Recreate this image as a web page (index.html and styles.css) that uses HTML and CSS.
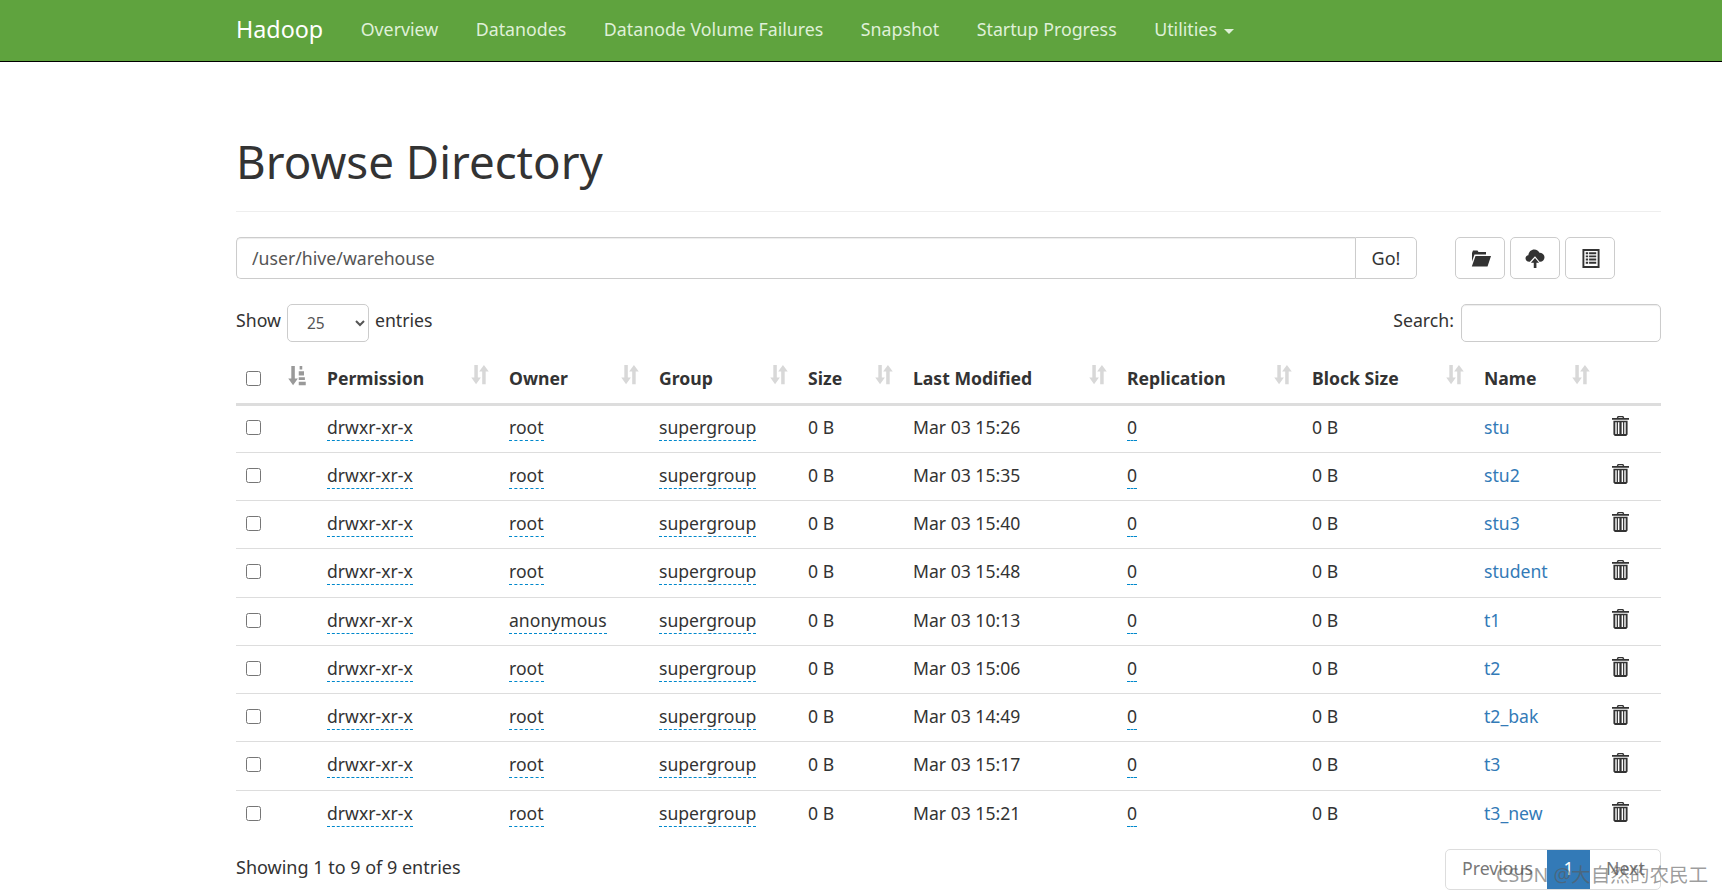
FILE: index.html
```html
<!DOCTYPE html>
<html lang="en">
<head>
<meta charset="utf-8">
<title>Browsing HDFS</title>
<link rel="stylesheet" href="styles.css">
</head>
<body>
<svg class="defs" width="0" height="0" aria-hidden="true">
  <defs>
    <symbol id="sort" viewBox="0 0 20 24">
      <path d="M3.500 1h4v14.500h3.500L5.500 23 0 15.500h3.500zM12.500 23V8.500H9L14.500 1 20 8.500h-3.500V23z"/>
    </symbol>
    <symbol id="sorted" viewBox="0 0 20 24">
      <path d="M3.500 1h4v14.500h3.500L5.500 23 0 15.500h3.500z"/>
      <path d="M13 1h3v4h-3zM12 7h6v5h-6zM12 14h7v3h-7zM12 19h8v4h-8z"/>
    </symbol>
    <symbol id="trash" viewBox="0 0 18 21">
      <path fill-rule="evenodd" d="M6 0h6l1 2h5v2H0V2h5zM7 1.200 6.600 2h4.800L11 1.200zM1.500 5h15v14.500L15 21H3l-1.500-1.500zM3.500 6.500v12.500h1.500V6.500zM6.300 6.500v12.500h1.500V6.500zM10.200 6.500v12.500h1.500V6.500zM13 6.500v12.500h1.500V6.500z"/>
    </symbol>
  </defs>
</svg>

<nav class="navbar">
  <div class="nav-inner">
    <a class="brand" href="#">Hadoop</a>
    <a class="nav-link" href="#">Overview</a>
    <a class="nav-link" href="#">Datanodes</a>
    <a class="nav-link" href="#">Datanode Volume Failures</a>
    <a class="nav-link" href="#">Snapshot</a>
    <a class="nav-link" href="#">Startup Progress</a>
    <a class="nav-link" href="#">Utilities <span class="caret"></span></a>
  </div>
</nav>

<main class="container">
  <header class="page-header">
    <h1>Browse Directory</h1>
  </header>

  <div class="path-row">
    <div class="input-group">
      <input class="path-input" type="text" value="/user/hive/warehouse">
      <button class="go-btn" type="button">Go!</button>
    </div>
    <div class="tools">
      <button class="tool-btn" type="button" aria-label="Create directory">
        <svg class="tool-icon nudge" viewBox="0 0 20 18"><path d="M1 3.500 2 1h4.500l1 1.500H15V5H3.500L1 12zM4.500 6.500H20L16.500 17H0.800z"/></svg>
      </button>
      <button class="tool-btn" type="button" aria-label="Upload files">
        <svg class="tool-icon" viewBox="0 0 20 20"><path d="M4 13.500C1.500 13.500 0 11.800 0 9.800 0 8 1.300 6.800 3 6.500 3.300 3 6 .5 9.300.5c2.500 0 4.500 1.300 5.400 3.500 2.900-.2 5.300 2 5.300 4.800 0 2.700-2 4.700-4.600 4.700h-.6L10 7.500 4.600 13.500z"/><path d="M10 9.500 14.300 14.500H11.500V20H8.700V14.500H5.700z"/></svg>
      </button>
      <button class="tool-btn" type="button" aria-label="Cut and paste">
        <svg class="tool-icon nudge" viewBox="0 0 18 20"><path fill-rule="evenodd" d="M0 0h18v20H0zM2 2v16h14V2zM3.500 3.500h2.500v2H3.500zM7 3.500h7.500v2H7zM3.500 6.800h2.500v2H3.500zM7 6.800h7.500v2H7zM3.500 10h2.500v2H3.500zM7 10h7.500v2H7zM3.500 13.500h2.500v2H3.500zM7 13.500h7.500v2H7z"/></svg>
      </button>
    </div>
  </div>

  <div class="table-controls">
    <label class="length">Show
      <select class="length-select"><option>25</option></select>
      entries</label>
    <label class="search">Search:
      <input class="search-input" type="search">
    </label>
  </div>

  <table class="files">
    <colgroup>
      <col class="c-check"><col class="c-sort"><col class="c-perm"><col class="c-owner"><col class="c-group"><col class="c-size"><col class="c-mod"><col class="c-rep"><col class="c-block"><col class="c-name"><col class="c-del">
    </colgroup>
    <thead>
      <tr>
        <th><input class="cb" type="checkbox"></th>
        <th><svg class="sort-icon sorted"><use href="#sorted"/></svg></th>
        <th><div class="th-in">Permission<svg class="sort-icon"><use href="#sort"/></svg></div></th>
        <th><div class="th-in">Owner<svg class="sort-icon"><use href="#sort"/></svg></div></th>
        <th><div class="th-in">Group<svg class="sort-icon"><use href="#sort"/></svg></div></th>
        <th><div class="th-in">Size<svg class="sort-icon"><use href="#sort"/></svg></div></th>
        <th><div class="th-in">Last Modified<svg class="sort-icon"><use href="#sort"/></svg></div></th>
        <th><div class="th-in">Replication<svg class="sort-icon"><use href="#sort"/></svg></div></th>
        <th><div class="th-in">Block Size<svg class="sort-icon"><use href="#sort"/></svg></div></th>
        <th><div class="th-in">Name<svg class="sort-icon"><use href="#sort"/></svg></div></th>
        <th></th>
      </tr>
    </thead>
    <tbody>
      <tr><td><input class="cb" type="checkbox"></td><td></td><td><span class="editable">drwxr-xr-x</span></td><td><span class="editable">root</span></td><td><span class="editable">supergroup</span></td><td>0 B</td><td>Mar 03 15:26</td><td><span class="editable">0</span></td><td>0 B</td><td><a class="name" href="#">stu</a></td><td><svg class="trash"><use href="#trash"/></svg></td></tr>
      <tr><td><input class="cb" type="checkbox"></td><td></td><td><span class="editable">drwxr-xr-x</span></td><td><span class="editable">root</span></td><td><span class="editable">supergroup</span></td><td>0 B</td><td>Mar 03 15:35</td><td><span class="editable">0</span></td><td>0 B</td><td><a class="name" href="#">stu2</a></td><td><svg class="trash"><use href="#trash"/></svg></td></tr>
      <tr><td><input class="cb" type="checkbox"></td><td></td><td><span class="editable">drwxr-xr-x</span></td><td><span class="editable">root</span></td><td><span class="editable">supergroup</span></td><td>0 B</td><td>Mar 03 15:40</td><td><span class="editable">0</span></td><td>0 B</td><td><a class="name" href="#">stu3</a></td><td><svg class="trash"><use href="#trash"/></svg></td></tr>
      <tr><td><input class="cb" type="checkbox"></td><td></td><td><span class="editable">drwxr-xr-x</span></td><td><span class="editable">root</span></td><td><span class="editable">supergroup</span></td><td>0 B</td><td>Mar 03 15:48</td><td><span class="editable">0</span></td><td>0 B</td><td><a class="name" href="#">student</a></td><td><svg class="trash"><use href="#trash"/></svg></td></tr>
      <tr><td><input class="cb" type="checkbox"></td><td></td><td><span class="editable">drwxr-xr-x</span></td><td><span class="editable">anonymous</span></td><td><span class="editable">supergroup</span></td><td>0 B</td><td>Mar 03 10:13</td><td><span class="editable">0</span></td><td>0 B</td><td><a class="name" href="#">t1</a></td><td><svg class="trash"><use href="#trash"/></svg></td></tr>
      <tr><td><input class="cb" type="checkbox"></td><td></td><td><span class="editable">drwxr-xr-x</span></td><td><span class="editable">root</span></td><td><span class="editable">supergroup</span></td><td>0 B</td><td>Mar 03 15:06</td><td><span class="editable">0</span></td><td>0 B</td><td><a class="name" href="#">t2</a></td><td><svg class="trash"><use href="#trash"/></svg></td></tr>
      <tr><td><input class="cb" type="checkbox"></td><td></td><td><span class="editable">drwxr-xr-x</span></td><td><span class="editable">root</span></td><td><span class="editable">supergroup</span></td><td>0 B</td><td>Mar 03 14:49</td><td><span class="editable">0</span></td><td>0 B</td><td><a class="name" href="#">t2_bak</a></td><td><svg class="trash"><use href="#trash"/></svg></td></tr>
      <tr><td><input class="cb" type="checkbox"></td><td></td><td><span class="editable">drwxr-xr-x</span></td><td><span class="editable">root</span></td><td><span class="editable">supergroup</span></td><td>0 B</td><td>Mar 03 15:17</td><td><span class="editable">0</span></td><td>0 B</td><td><a class="name" href="#">t3</a></td><td><svg class="trash"><use href="#trash"/></svg></td></tr>
      <tr><td><input class="cb" type="checkbox"></td><td></td><td><span class="editable">drwxr-xr-x</span></td><td><span class="editable">root</span></td><td><span class="editable">supergroup</span></td><td>0 B</td><td>Mar 03 15:21</td><td><span class="editable">0</span></td><td>0 B</td><td><a class="name" href="#">t3_new</a></td><td><svg class="trash"><use href="#trash"/></svg></td></tr>
    </tbody>
  </table>

  <div class="table-footer">
    <div class="info">Showing 1 to 9 of 9 entries</div>
    <div class="pagination">
      <a class="page prev" href="#">Previous</a>
      <a class="page current" href="#">1</a>
      <a class="page next" href="#">Next</a>
    </div>
  </div>
</main>

<div class="watermark">CSDN @大自然的农民工</div>
</body>
</html>
```

FILE: styles.css
```css
* { box-sizing: border-box; }

html, body {
  margin: 0;
  height: 895px;
  overflow: hidden;
}

body {
  font-family: "Noto Sans", "Noto Sans CJK SC", sans-serif;
  font-size: 18px;
  line-height: 26px;
  color: #333;
  background: #fff;
  position: relative;
}

.defs { position: absolute; }

a { text-decoration: none; }

.navbar {
  height: 62px;
  background: #5fa33e;
  border-bottom: 1px solid #000;
}

.nav-inner {
  padding-left: 236px;
  display: flex;
  align-items: center;
  height: 58px;
  gap: 37.500px;
}

.brand {
  font-size: 23.300px;
  color: #fff;
}

.nav-link {
  color: #dff0d8;
  font-size: 17.800px;
}

.caret {
  display: inline-block;
  width: 0;
  height: 0;
  margin-left: 2px;
  vertical-align: middle;
  border-top: 5px solid #dff0d8;
  border-left: 5px solid transparent;
  border-right: 5px solid transparent;
}

.container {
  width: 1425px;
  margin-left: 236px;
}

.page-header {
  height: 150px;
  border-bottom: 1px solid #eee;
  padding-top: 73px;
}

h1 {
  margin: 0;
  font-size: 45.700px;
  font-weight: 400;
  line-height: 52px;
  color: #333;
}

.path-row {
  display: flex;
  margin-top: 25px;
  align-items: flex-start;
}

.input-group {
  display: flex;
  width: 1181px;
  height: 42px;
}

.path-input {
  flex: 1;
  min-width: 0;
  height: 42px;
  padding: 0 15px;
  font: inherit;
  font-size: 17.700px;
  color: #555;
  border: 1px solid #ccc;
  border-right: 0;
  border-radius: 5px 0 0 5px;
  box-shadow: inset 0 1px 1px rgba(0, 0, 0, .075);
}

.go-btn {
  width: 62px;
  height: 42px;
  font: inherit;
  color: #333;
  background: #fff;
  border: 1px solid #ccc;
  border-radius: 0 5px 5px 0;
  padding: 0;
}

.tools {
  display: flex;
  gap: 5px;
  margin-left: 38px;
}

.tool-btn {
  width: 50px;
  height: 42px;
  background: #fff;
  border: 1px solid #ccc;
  border-radius: 5px;
  padding: 0;
  display: flex;
  align-items: center;
  justify-content: center;
}

.tool-icon {
  width: 20px;
  height: 19px;
  fill: #333;
}

.nudge { margin-left: 2px; }

.table-controls {
  display: flex;
  justify-content: space-between;
  margin-top: 25px;
  height: 38px;
  font-size: 17.700px;
}

.length, .search {
  display: flex;
  align-items: flex-start;
  gap: 6px;
  line-height: 32px;
}

.length-select {
  width: 82px;
  height: 38px;
  font: inherit;
  font-size: 15.500px;
  color: #555;
  padding: 0 0 0 15px;
  background: #fff;
  border: 1px solid #ccc;
  border-radius: 5px;
}

.search { gap: 7px; }

.search-input {
  width: 200px;
  height: 38px;
  border: 1px solid #ccc;
  border-radius: 5px;
  box-shadow: inset 0 1px 1px rgba(0, 0, 0, .075);
}

.files {
  width: 1425px;
  table-layout: fixed;
  border-collapse: collapse;
  margin-top: 12px;
  font-size: 17.600px;
}

.c-check { width: 44px; }
.c-sort { width: 37px; }
.c-perm { width: 182px; }
.c-owner { width: 150px; }
.c-group { width: 149px; }
.c-size { width: 105px; }
.c-mod { width: 214px; }
.c-rep { width: 185px; }
.c-block { width: 172px; }
.c-name { width: 126px; }
.c-del { width: 61px; }

th, td {
  padding: 0 0 0 10px;
  text-align: left;
  vertical-align: middle;
}

th {
  height: 50px;
  font-weight: 700;
  border-bottom: 3px solid #ddd;
}

.th-in {
  display: flex;
  justify-content: space-between;
  align-items: flex-start;
  padding-right: 10px;
  line-height: 28px;
}

td {
  height: 48.250px;
  padding-bottom: 3px;
  border-top: 1px solid #ddd;
}

thead + tbody tr:first-child td { border-top: 0; }

.sort-icon {
  width: 18px;
  height: 21px;
  fill: #d8d8d8;
}

.sorted {
  fill: #999;
  margin-left: -2px;
}

.cb {
  display: block;
  width: 15px;
  height: 15px;
  margin: 1px 0 0;
}

th .cb { margin: 0; }

.editable {
  border-bottom: 1px dashed #0088cc;
  padding-bottom: 1px;
}

.name { color: #337ab7; }

.trash {
  display: block;
  width: 17px;
  height: 20px;
  fill: #333;
  margin: 0 0 2px 2px;
}

.table-footer {
  display: flex;
  justify-content: space-between;
  align-items: flex-start;
  margin-top: 11px;
}

.info { padding-top: 5px; }

.pagination {
  display: flex;
  height: 41px;
  border: 1px solid #ddd;
  border-radius: 5px;
  overflow: hidden;
}

.page {
  display: flex;
  align-items: center;
  color: #777;
  font-size: 17.700px;
  padding-bottom: 3px;
}

.prev { width: 101px; padding-left: 16px; }

.current {
  width: 43px;
  justify-content: center;
  background: #337ab7;
  color: #fff;
}

.next { width: 70px; padding-left: 16px; }

.watermark {
  position: absolute;
  left: 1496px;
  top: 861px;
  font-size: 19.600px;
  line-height: 28px;
  color: rgba(90, 90, 90, .6);
  white-space: nowrap;
}
```
